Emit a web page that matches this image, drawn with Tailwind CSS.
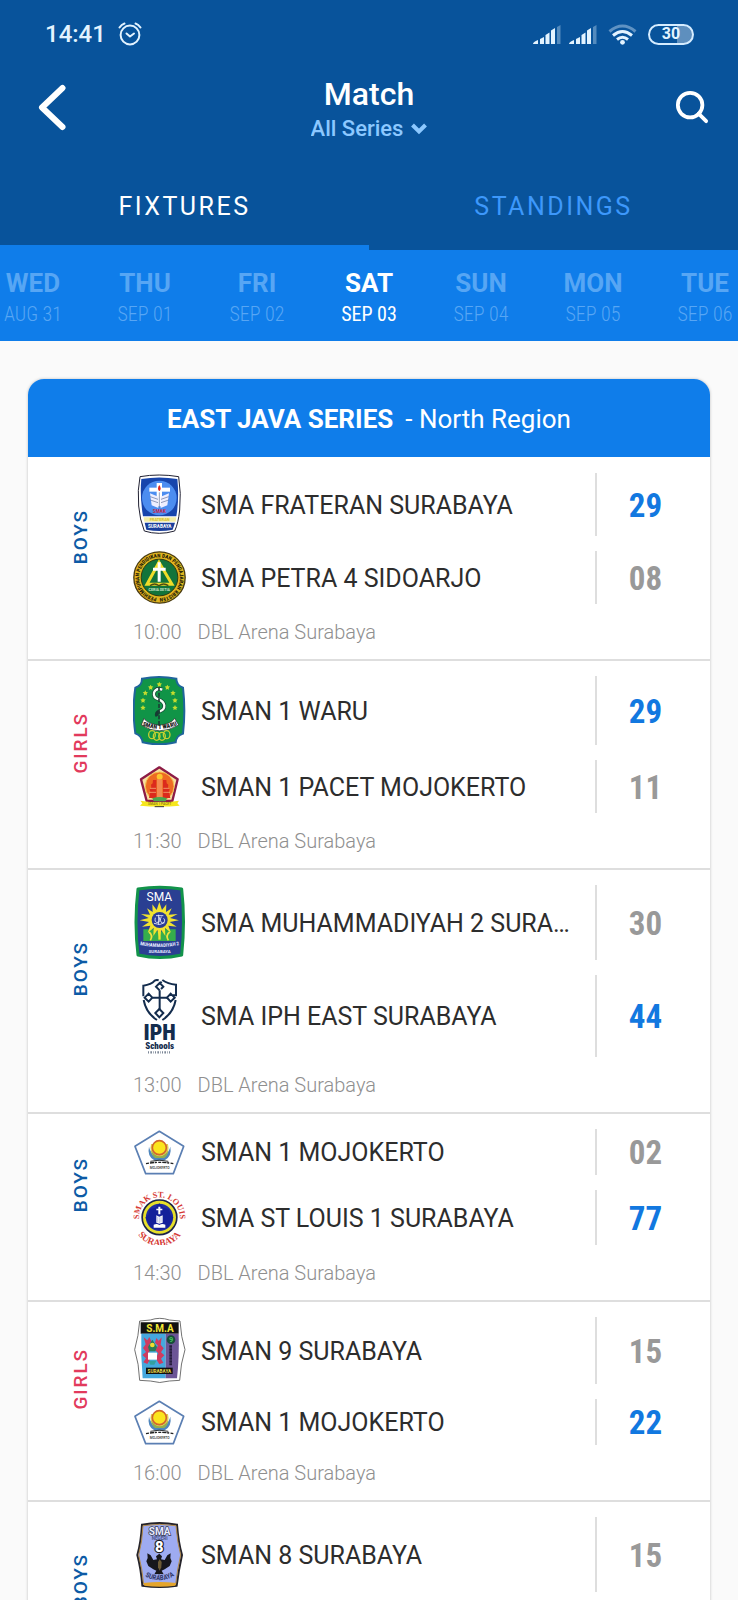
<!DOCTYPE html>
<html lang="en">
  <head>
    <meta charset="UTF-8" />
    <meta name="viewport" content="width=device-width, initial-scale=1.0" />
    <script src="https://cdn.jsdelivr.net/npm/@tailwindcss/browser@4"></script>
    <title>Match</title>
  </head>
  <body class="flex h-screen flex-col overflow-hidden bg-[#fafafa] font-[Roboto,sans-serif] text-[#2d2d2d]">
    <header class="shrink-0 bg-[#08539b] text-white">
      <!-- Status bar -->
      <div class="flex h-[68px] items-center justify-between pl-[45px] pr-11 text-[#e3f3ff]">
        <div class="flex items-center gap-3">
          <span class="text-[24px] leading-7 font-medium">14:41</span>
          <svg class="h-6 w-6" viewBox="0 0 24 24" fill="none" stroke="currentColor" stroke-width="2" stroke-linecap="round" stroke-linejoin="round">
            <circle cx="12" cy="13" r="9.400" />
            <path d="M8.500 11.500l3.500 3 4-3M1.500 5.500q2-3 5-4M22.500 5.500q-2-3-5-4" />
          </svg>
        </div>
        <div class="flex items-center">
          <svg class="mr-2 h-[21px] w-7" viewBox="0 0 28 21" fill="currentColor">
            <path d="M0 20q0-2 5-4v4zM7 15l4-2v7H7zM12.500 11l4-2.500V20h-4zM18 6.500L22 4v16h-4z" />
            <path opacity=".35" d="M24 3l3.500-2v19H24z" />
          </svg>
          <svg class="mr-[11px] h-[21px] w-7" viewBox="0 0 28 21" fill="currentColor">
            <path d="M0 20q0-2 5-4v4zM7 15l4-2v7H7zM12.500 11l4-2.500V20h-4zM18 6.500L22 4v16h-4z" />
            <path opacity=".35" d="M24 3l3.500-2v19H24z" />
          </svg>
          <svg class="mr-[11px] h-[21px] w-[29px]" viewBox="0 0 29 21" fill="none" stroke="currentColor" stroke-width="3">
            <path opacity=".4" d="M1.500 7.500q13-11 26 0" />
            <path d="M5 11.500q9.500-8 19 0M9 15.500q5.500-4.500 11 0" />
            <circle cx="14.500" cy="18.300" r="2.400" fill="currentColor" stroke="none" />
          </svg>
          <div class="flex h-[21px] w-[46px] items-center justify-center rounded-full border-2 border-[#d5ecff] bg-linear-to-r from-transparent from-65% to-white/35 to-65% text-[16px] leading-4 font-bold">30</div>
        </div>
      </div>

      <!-- Title -->
      <div class="flex h-[107px] items-start justify-between px-7">
        <button aria-label="Back" class="mt-[15px] flex h-12 w-12 items-center justify-center">
          <svg class="h-12 w-8" viewBox="0 0 32 48" fill="none" stroke="currentColor" stroke-width="6" stroke-linecap="round" stroke-linejoin="round">
            <path d="M26.500 5L6 24.500 26.500 44" />
          </svg>
        </button>
        <div class="flex flex-col items-center">
          <h1 class="mt-1.5 text-[32px] leading-10 font-medium">Match</h1>
          <div class="flex items-center gap-2 pt-px text-[#8cc8ff]">
            <select aria-label="Series" class="field-sizing-content appearance-none bg-transparent text-[22px] leading-7 font-medium">
              <option>All Series</option>
            </select>
            <svg class="h-3 w-4" viewBox="0 0 16 12" fill="none" stroke="currentColor" stroke-width="4">
              <path d="M1.500 2L8 8.500 14.500 2" />
            </svg>
          </div>
        </div>
        <button aria-label="Search" class="mt-[15px] flex h-12 w-12 items-center justify-center">
          <svg class="ml-3 h-[34px] w-[34px]" viewBox="0 0 36 36" fill="none" stroke="currentColor" stroke-width="4" stroke-linecap="round">
            <circle cx="16" cy="16" r="13" />
            <path d="M25 25l8 8" />
          </svg>
        </button>
      </div>

      <!-- Tabs -->
      <div class="flex h-[75px] text-[25px] tracking-widest">
        <button class="flex-1 border-b-[5px] border-[#0f7dea] pb-1.5">FIXTURES</button>
        <button class="flex-1 border-b-[5px] border-transparent pb-1.5 text-[#3d98fb]">STANDINGS</button>
      </div>
    </header>

    <!-- Days -->
    <nav class="flex h-[91px] shrink-0 justify-center overflow-hidden bg-[#0f7dea] pt-[18px] text-[#57a6f4]">
      <button class="flex w-28 shrink-0 flex-col items-center">
        <span class="text-[26px] leading-[30px] font-bold">WED</span>
        <span class="font-['Roboto_Condensed',Roboto,sans-serif] text-[20px] leading-8 font-light">AUG 31</span>
      </button>
      <button class="flex w-28 shrink-0 flex-col items-center">
        <span class="text-[26px] leading-[30px] font-bold">THU</span>
        <span class="font-['Roboto_Condensed',Roboto,sans-serif] text-[20px] leading-8 font-light">SEP 01</span>
      </button>
      <button class="flex w-28 shrink-0 flex-col items-center">
        <span class="text-[26px] leading-[30px] font-bold">FRI</span>
        <span class="font-['Roboto_Condensed',Roboto,sans-serif] text-[20px] leading-8 font-light">SEP 02</span>
      </button>
      <button class="flex w-28 shrink-0 flex-col items-center text-white">
        <span class="text-[26px] leading-[30px] font-bold">SAT</span>
        <span class="font-['Roboto_Condensed',Roboto,sans-serif] text-[20px] leading-8">SEP 03</span>
      </button>
      <button class="flex w-28 shrink-0 flex-col items-center">
        <span class="text-[26px] leading-[30px] font-bold">SUN</span>
        <span class="font-['Roboto_Condensed',Roboto,sans-serif] text-[20px] leading-8 font-light">SEP 04</span>
      </button>
      <button class="flex w-28 shrink-0 flex-col items-center">
        <span class="text-[26px] leading-[30px] font-bold">MON</span>
        <span class="font-['Roboto_Condensed',Roboto,sans-serif] text-[20px] leading-8 font-light">SEP 05</span>
      </button>
      <button class="flex w-28 shrink-0 flex-col items-center">
        <span class="text-[26px] leading-[30px] font-bold">TUE</span>
        <span class="font-['Roboto_Condensed',Roboto,sans-serif] text-[20px] leading-8 font-light">SEP 06</span>
      </button>
    </nav>

    <main class="min-h-0 flex-1 overflow-hidden px-7 pt-[38px]">
      <section class="rounded-t-2xl bg-white shadow-[0_0_3px_rgba(0,0,0,0.25)]">
        <h2 class="flex h-[78px] items-center justify-center gap-3 rounded-t-2xl bg-[#0f7dea] pt-0.5 text-[26px] text-white">
          <span class="font-bold">EAST JAVA SERIES</span>
          <span>- North Region</span>
        </h2>

        <!-- Frateran vs Petra 4 -->
        <article class="border-b-2 border-[#dedede] pt-4 pr-4 pb-[15px]">
          <div class="flex">
            <div class="flex w-[105px] shrink-0 items-center justify-center">
              <span class="mb-1 rotate-180 text-[19px] leading-6 font-medium tracking-widest text-[#0d5ba6] [writing-mode:vertical-rl]">BOYS</span>
            </div>
            <div class="flex min-w-0 flex-1 flex-col gap-[15px]">
              <div class="flex items-center gap-[15px]">
                <svg class="h-[63px] w-[53px] shrink-0" viewBox="339 54 159 189">
                  <path d="M360 65q57-10 116 0 8 50 3 100-4 40-15 63-47 14-91 0-14-35-17-75-4-50 4-88z" fill="#fff" stroke="#223" stroke-width="3" />
                  <path d="M364 72q54-9 108 0 6 60-3 112H369q-10-60-5-112z" fill="#1745ac" />
                  <circle cx="418" cy="129" r="52" fill="#4c8df0" />
                  <path d="M388 98h62v12h-62z" fill="#fff" />
                  <path d="M410 84h16v70h-16z" fill="#fff" />
                  <path d="M390 115l25 10v34l-20-8zM447 115l-25 10v34l20-8z" fill="#eef" />
                  <path d="M391 125l23 8M391 135l23 8M446 125l-23 8M446 135l-23 8M418 112v46" stroke="#5d6d96" stroke-width="2" />
                  <path d="M418 90q8 11 0 19-8-8 0-19z" fill="#e0261c" />
                  <text x="418" y="174" text-anchor="middle" font-size="14" font-weight="700" fill="#c8284a">SMAK</text>
                  <path d="M371 187h98l-2 13h-94z" fill="#f3eeaa" />
                  <text x="419" y="198" text-anchor="middle" font-size="12" font-weight="700" fill="#d6bf28">FRATERAN</text>
                  <path d="M374 203h91l-7 21q-38 8-79 0z" fill="#1b3f9c" />
                  <text x="419" y="219" text-anchor="middle" font-size="14" font-weight="700" fill="#fff">SURABAYA</text>
                </svg>
                <h3 class="min-w-0 flex-1 truncate pt-0.5 text-[25px]">SMA FRATERAN SURABAYA</h3>
                <div class="flex w-[99px] items-center justify-center self-stretch border-l-2 border-[#dedede] pt-0.5 font-['Roboto_Condensed',Roboto,sans-serif] text-[33px] leading-10 font-bold text-[#1278e0]">29</div>
              </div>
              <div class="flex items-center gap-[15px]">
                <svg class="h-[53px] w-[53px] shrink-0" viewBox="339 288 159 159">
                  <circle cx="418.500" cy="367.500" r="77" fill="#e0b41f" stroke="#4a3c12" stroke-width="4" />
                  <path id="petraRing" d="M418 429a61 61 0 1 1 1 0" fill="none" />
                  <text font-family="Roboto Condensed, Roboto" font-size="16" font-weight="800" fill="#241c08"><textPath href="#petraRing" startOffset="8">PERHIMPUNAN PENDIDIKAN DAN PENGAJARAN KRISTEN</textPath></text>
                  <circle cx="418.500" cy="367.500" r="55" fill="#12743b" stroke="#2d3a12" stroke-width="3" />
                  <path d="M417 322l-36 66h75z" fill="none" stroke="#f0dc28" stroke-width="9" />
                  <path d="M417 338l-19 42h38z" fill="#12743b" />
                  <path d="M413 322h9v58h-9zM399 338h38v9h-38z" fill="#fff" />
                  <path d="M390 392q14-10 27 0 14-10 28 0" fill="none" stroke="#4b4a13" stroke-width="4" />
                  <text x="418" y="409" text-anchor="middle" font-size="11" font-weight="700" fill="#cfe8d0">CERIA SETIA</text>
                </svg>
                <h3 class="min-w-0 flex-1 truncate pt-0.5 text-[25px]">SMA PETRA 4 SIDOARJO</h3>
                <div class="flex w-[99px] items-center justify-center self-stretch border-l-2 border-[#dedede] pt-0.5 font-['Roboto_Condensed',Roboto,sans-serif] text-[33px] leading-10 font-bold text-[#999]">08</div>
              </div>
            </div>
          </div>
          <p class="mt-4 flex gap-4 pl-[105px] text-[20px] leading-6 font-light text-[#8f8f8f]"><time>10:00</time><span>DBL Arena Surabaya</span></p>
        </article>

        <!-- Waru vs Pacet -->
        <article class="border-b-2 border-[#dedede] pt-[15px] pr-4 pb-[15px]">
          <div class="flex">
            <div class="flex w-[105px] shrink-0 items-center justify-center">
              <span class="mb-1 rotate-180 text-[19px] leading-6 font-medium tracking-widest text-[#e23a5c] [writing-mode:vertical-rl]">GIRLS</span>
            </div>
            <div class="flex min-w-0 flex-1 flex-col gap-[15px]">
              <div class="flex items-center gap-[15px]">
                <svg class="h-[69px] w-[53px] shrink-0" viewBox="339 47 159 207">
                  <path d="M366 55q52-10 103 0 0 20 20 27 8 70 0 138-20 6-22 26-50 12-99 0-3-20-22-27-10-70 0-137 20-6 20-27z" fill="#109447" stroke="#1f659b" stroke-width="6" />
                  <g fill="#c5dc2e">
                    <path id="star" d="M418 64l2.500 5 5.500.8-4 4 1 5.500-5-2.600-5 2.600 1-5.500-4-4 5.500-.8z" />
                    <use href="#star" x="-26" y="9" /><use href="#star" x="24" y="9" />
                    <use href="#star" x="-42" y="26" /><use href="#star" x="41" y="26" />
                    <use href="#star" x="-49" y="48" /><use href="#star" x="47" y="48" />
                    <use href="#star" x="-49" y="70" /><use href="#star" x="47" y="70" />
                  </g>
                  <path d="M427 88q-19-7-25 9-3 15 14 20 15 6 17 18 1 13-14 18-13 5-7 14" fill="none" stroke="#163a32" stroke-width="11" />
                  <path d="M427 88q-19-7-25 9-3 15 14 20 15 6 17 18 1 13-14 18" fill="none" stroke="#f5fff5" stroke-width="7" />
                  <path d="M417 80v122" stroke="#1c4136" stroke-width="5" stroke-dasharray="12 5" />
                  <path id="waru" d="M364 194q54 24 110-1" fill="none" />
                  <path d="M372 174q6 14 45 21 38-5 47-21l12 20q-59 35-112 0z" fill="#fff" stroke="#222" stroke-width="2" />
                  <text font-family="Roboto Condensed, Roboto" font-size="18" font-weight="900" fill="#222"><textPath href="#waru" startOffset="50%" text-anchor="middle">SMAN 1 WARU</textPath></text>
                  <g fill="none" stroke="#c6cf32" stroke-width="4">
                    <ellipse cx="396" cy="223" rx="10" ry="12" /><ellipse cx="410" cy="228" rx="10" ry="12" /><ellipse cx="426" cy="228" rx="10" ry="12" /><ellipse cx="440" cy="223" rx="10" ry="12" />
                  </g>
                </svg>
                <h3 class="min-w-0 flex-1 truncate pt-0.5 text-[25px]">SMAN 1 WARU</h3>
                <div class="flex w-[99px] items-center justify-center self-stretch border-l-2 border-[#dedede] pt-0.5 font-['Roboto_Condensed',Roboto,sans-serif] text-[33px] leading-10 font-bold text-[#1278e0]">29</div>
              </div>
              <div class="flex items-center gap-[15px]">
                <svg class="h-[53px] w-[53px] shrink-0" viewBox="339 300 159 159">
                  <path d="M418 322l55 36-16 65h-77l-17-65z" fill="#f7dfa0" stroke="#8d1c46" stroke-width="7" stroke-linejoin="round" />
                  <circle cx="419" cy="379" r="43" fill="#ee6a22" stroke="#f3c24d" stroke-width="3" />
                  <circle cx="419" cy="350" r="9" fill="#fbc72d" />
                  <path d="M399 360h10v54h-22l4-18-2-8 5-6-1-8 5-4zM439 360h-10v54h22l-4-18 2-8-5-6 1-8-5-4z" fill="#dc2a1c" />
                  <path d="M411 358h16v55h-16z" fill="#f48b50" />
                  <path d="M390 385h18M430 385h18M388 397h20M430 397h20" stroke="#f8c28a" stroke-width="2" />
                  <path d="M397 415q21-8 44 0l-4 9h-36z" fill="#4ba750" />
                  <path d="M361 422q58 9 116 0l-5 8 7 7q-60 5-119 0l7-7z" fill="#f6e61d" />
                  <text x="419" y="436" text-anchor="middle" font-size="10" font-weight="500" fill="#8a7a18">SMAN 1 PACET</text>
                  <path d="M404 440h28" stroke="#333" stroke-width="3" />
                </svg>
                <h3 class="min-w-0 flex-1 truncate pt-0.5 text-[25px]">SMAN 1 PACET MOJOKERTO</h3>
                <div class="flex w-[99px] items-center justify-center self-stretch border-l-2 border-[#dedede] pt-0.5 font-['Roboto_Condensed',Roboto,sans-serif] text-[33px] leading-10 font-bold text-[#999]">11</div>
              </div>
            </div>
          </div>
          <p class="mt-4 flex gap-4 pl-[105px] text-[20px] leading-6 font-light text-[#8f8f8f]"><time>11:30</time><span>DBL Arena Surabaya</span></p>
        </article>

        <!-- Muhammadiyah 2 vs IPH East -->
        <article class="border-b-2 border-[#dedede] pt-[15px] pr-4 pb-[15px]">
          <div class="flex">
            <div class="flex w-[105px] shrink-0 items-center justify-center">
              <span class="mb-1 rotate-180 text-[19px] leading-6 font-medium tracking-widest text-[#0d5ba6] [writing-mode:vertical-rl]">BOYS</span>
            </div>
            <div class="flex min-w-0 flex-1 flex-col gap-[15px]">
              <div class="flex items-center gap-[15px]">
                <svg class="h-[75px] w-[53px] shrink-0" viewBox="339 51 159 225">
                  <path d="M354 63q65-11 131 0 11 98 0 198-65 15-131 0-12-98 0-198z" fill="#2a3f92" stroke="#12934a" stroke-width="9" stroke-linejoin="round" />
                  <text x="418" y="98" text-anchor="middle" font-size="36" fill="#fff">SMA</text>
                  <path d="M370 184h33l15 12 16-12h33v35h-97z" fill="#35ad4c" />
                  <path d="M387 192q13 10 4 25M449 192q-13 10-4 25" fill="none" stroke="#f3e13c" stroke-width="5" />
                  <path d="M418 102l8 24 13-17-1 23 17-11-9 19 27-2-23 12 27 7-28 5 21 14-25-3 8 21-18-14 1 24-12-18-6 25-6-25-12 18 1-24-18 14 8-21-25 3 21-14-28-5 27-7-23-12 27 2-9-19 17 11-1-23 13 17z" fill="#f1e22f" />
                  <path d="M415 184h7v31h-7z" fill="#f1e22f" />
                  <circle cx="419" cy="156" r="24" fill="#2b3c96" />
                  <path d="M406 149q-4 16 8 14 9-3 3-16M424 146q-7 14 3 19 12-4 4-14M408 143h22M416 140v30M402 166q18 8 32-2" fill="none" stroke="#f4f5ff" stroke-width="2.500" />
                  <path id="muh" d="M360 231q58 12 118 0" fill="none" />
                  <text font-family="Roboto Condensed, Roboto" font-size="15" font-weight="700" fill="#e4e8ff"><textPath href="#muh" startOffset="50%" text-anchor="middle">MUHAMMADIYAH 2</textPath></text>
                  <text x="419" y="255" text-anchor="middle" font-size="13" font-weight="700" fill="#e4e8ff">SURABAYA</text>
                </svg>
                <h3 class="min-w-0 flex-1 truncate pt-0.5 text-[25px]">SMA MUHAMMADIYAH 2 SURABAYA</h3>
                <div class="flex w-[99px] items-center justify-center self-stretch border-l-2 border-[#dedede] pt-0.5 font-['Roboto_Condensed',Roboto,sans-serif] text-[33px] leading-10 font-bold text-[#999]">30</div>
              </div>
              <div class="flex items-center gap-[15px]">
                <svg class="h-[82px] w-[53px] shrink-0" viewBox="339 321 159 246">
                  <g fill="none" stroke="#132c4d" stroke-width="6">
                    <path d="M370 385v-32q24-3 34-15 5-3 12-1M427 336q16 12 41 14v32h-10M371 396q7 39 40 60M467 396q-7 39-40 60" />
                    <path d="M419 367v56M397 389h44" />
                    <path d="M419 367l-11-11 11-11 11 11-7 7M425 341l-9 8" />
                    <path d="M397 389l-11 12-12-12 12-12zM441 389l11-12 12 12-12 12z" />
                    <path d="M418 423l12 12-12 13-12-13z" />
                  </g>
                  <text x="419" y="516" text-anchor="middle" font-family="Roboto Condensed, Roboto" font-size="66" font-weight="900" fill="#132c4d">IPH</text>
                  <text x="419" y="544" text-anchor="middle" font-family="Roboto Condensed, Roboto" font-size="27" font-weight="900" fill="#132c4d">Schools</text>
                  <path d="M384 553h70" stroke="#7c8797" stroke-width="7" stroke-dasharray="3 4 5 3 2 4" />
                </svg>
                <h3 class="min-w-0 flex-1 truncate pt-0.5 text-[25px]">SMA IPH EAST SURABAYA</h3>
                <div class="flex w-[99px] items-center justify-center self-stretch border-l-2 border-[#dedede] pt-0.5 font-['Roboto_Condensed',Roboto,sans-serif] text-[33px] leading-10 font-bold text-[#1278e0]">44</div>
              </div>
            </div>
          </div>
          <p class="mt-4 flex gap-4 pl-[105px] text-[20px] leading-6 font-light text-[#8f8f8f]"><time>13:00</time><span>DBL Arena Surabaya</span></p>
        </article>

        <!-- Mojokerto vs St Louis 1 -->
        <article class="border-b-2 border-[#dedede] pt-[15px] pr-4 pb-[15px]">
          <div class="flex">
            <div class="flex w-[105px] shrink-0 items-center justify-center">
              <span class="mb-1 rotate-180 text-[19px] leading-6 font-medium tracking-widest text-[#0d5ba6] [writing-mode:vertical-rl]">BOYS</span>
            </div>
            <div class="flex min-w-0 flex-1 flex-col gap-[15px]">
              <div class="flex items-center gap-[15px]">
                <svg class="h-[46px] w-[53px] shrink-0" viewBox="339 51 159 138">
                  <g id="mojokerto">
                    <path d="M418 58l73 45-31 82h-83l-32-82z" fill="#fff" stroke="#5b7fb3" stroke-width="5" stroke-linejoin="round" />
                    <path d="M387 104q-7 30 18 42h27q25-12 19-42-4 17-17 23h-30q-14-6-17-23z" fill="#4f86bd" />
                    <path d="M393 96q-7 28 14 42h24q20-14 13-42z" fill="#e2cf55" />
                    <path d="M394 116q2 16 13 22h24q12-6 13-22-10 16-25 17-15-1-25-17z" fill="#8fae4d" />
                    <circle cx="418" cy="107" r="21" fill="#fbe51c" stroke="#d2672c" stroke-width="5" />
                    <path d="M391 148q27-7 54 0" fill="none" stroke="#333" stroke-width="3" />
                    <path d="M378 155q40-8 82 0" fill="none" stroke="#222" stroke-width="4" stroke-dasharray="9 3 13 2 6 4" />
                    <text x="419" y="170" text-anchor="middle" font-size="10" font-weight="500" fill="#333">MOJOKERTO</text>
                  </g>
                </svg>
                <h3 class="min-w-0 flex-1 truncate pt-0.5 text-[25px]">SMAN 1 MOJOKERTO</h3>
                <div class="flex w-[99px] items-center justify-center self-stretch border-l-2 border-[#dedede] pt-0.5 font-['Roboto_Condensed',Roboto,sans-serif] text-[33px] leading-10 font-bold text-[#999]">02</div>
              </div>
              <div class="flex items-center gap-[15px]">
                <svg class="h-[55px] w-[53px] shrink-0" viewBox="339 234 159 165">
                  <path id="louisTop" d="M362 340a61 61 0 1 1 113 0" fill="none" />
                  <text font-family="Liberation Serif" font-size="25" font-weight="700" fill="#d63a35"><textPath href="#louisTop" startOffset="50%" text-anchor="middle">SMAK ST. LOUIS</textPath></text>
                  <path id="louisBottom" d="M341 338a79 79 0 0 0 155 0" fill="none" />
                  <text font-family="Liberation Serif" font-size="28" font-weight="700" fill="#d63a35"><textPath href="#louisBottom" startOffset="50%" text-anchor="middle">SURABAYA</textPath></text>
                  <circle cx="418.500" cy="316" r="52" fill="#e6df2a" stroke="#1c2348" stroke-width="5" />
                  <circle cx="418.500" cy="316" r="41" fill="#1f2da0" />
                  <path d="M418 274l12 13 17 4 4 17 9 9-8 13-7 16-27 7-27-7-7-16-8-13 9-9 4-17 17-4z" fill="#14209a" />
                  <path d="M415 284h6v23h-6zM409 290h18v5h-18zM409 310l9 4 10-4v22l-10 3-9-3zM401 338q10-4 17 1 8-5 18-1v9h-35z" fill="#fff" />
                  <path d="M413 314v17M418 316v17M423 314v17" stroke="#8994cf" stroke-width="1.500" />
                </svg>
                <h3 class="min-w-0 flex-1 truncate pt-0.5 text-[25px]">SMA ST LOUIS 1 SURABAYA</h3>
                <div class="flex w-[99px] items-center justify-center self-stretch border-l-2 border-[#dedede] pt-0.5 font-['Roboto_Condensed',Roboto,sans-serif] text-[33px] leading-10 font-bold text-[#1278e0]">77</div>
              </div>
            </div>
          </div>
          <p class="mt-4 flex gap-4 pl-[105px] text-[20px] leading-6 font-light text-[#8f8f8f]"><time>14:30</time><span>DBL Arena Surabaya</span></p>
        </article>

        <!-- SMAN 9 vs Mojokerto -->
        <article class="border-b-2 border-[#dedede] pt-[15px] pr-4 pb-[15px]">
          <div class="flex">
            <div class="flex w-[105px] shrink-0 items-center justify-center">
              <span class="mb-1 rotate-180 text-[19px] leading-6 font-medium tracking-widest text-[#e23a5c] [writing-mode:vertical-rl]">GIRLS</span>
            </div>
            <div class="flex min-w-0 flex-1 flex-col gap-[15px]">
              <div class="flex items-center gap-[15px]">
                <svg class="h-[67px] w-[53px] shrink-0" viewBox="339 51 159 201">
                  <path d="M359 63l32-3q28-10 57 0l32 3q3 49 15 86-13 40-16 92l-31 2q-29 9-57 0l-32-2q-2-50-15-92 12-42 15-86z" fill="#fff" stroke="#555" stroke-width="2.500" />
                  <path d="M362 67h114v34H362z" fill="#111" />
                  <text x="420" y="95" text-anchor="middle" font-size="30" font-weight="700" fill="#f4e836">S.M.A</text>
                  <path d="M364 101h73v134h-69q-6-70-4-134z" fill="#45a8de" />
                  <path d="M437 101h39q2 70-5 134h-34z" fill="#6b5596" />
                  <circle cx="453" cy="119" r="13" fill="#174d3a" />
                  <text x="453" y="127" text-anchor="middle" font-size="22" font-weight="700" fill="#45c95c">9</text>
                  <path d="M452 136v60" stroke="#251c3d" stroke-width="8" stroke-dasharray="7 2" />
                  <path d="M371 112l11 9 6-10 7 14-8 9 8 14-10 10 8 15-11 19-12-5 8-12-11-10 11-9-9-12 8-11zM425 112l-9 10-7-8-4 14 9 9-9 13 10 10-8 15 11 18 12-5-7-12 10-10-10-9 8-12-9-11z" fill="#cf3b60" />
                  <path d="M397 119l14 22-5 13h-18l-4-13z" fill="#2c7b56" />
                  <circle cx="397" cy="135" r="7" fill="#f1dd31" />
                  <path d="M384 158h27v21h-27z" fill="#fff" />
                  <path d="M386 182h23l-6 12h-12z" fill="#33a0a0" />
                  <path d="M378 203h80v19h-80z" fill="#111" />
                  <text x="418" y="218" text-anchor="middle" font-size="14" font-weight="700" fill="#e8dc4c">SURABAYA</text>
                </svg>
                <h3 class="min-w-0 flex-1 truncate pt-0.5 text-[25px]">SMAN 9 SURABAYA</h3>
                <div class="flex w-[99px] items-center justify-center self-stretch border-l-2 border-[#dedede] pt-0.5 font-['Roboto_Condensed',Roboto,sans-serif] text-[33px] leading-10 font-bold text-[#999]">15</div>
              </div>
              <div class="flex items-center gap-[15px]">
                <svg class="h-[46px] w-[53px] shrink-0" viewBox="339 51 159 138"><use href="#mojokerto" /></svg>
                <h3 class="min-w-0 flex-1 truncate pt-0.5 text-[25px]">SMAN 1 MOJOKERTO</h3>
                <div class="flex w-[99px] items-center justify-center self-stretch border-l-2 border-[#dedede] pt-0.5 font-['Roboto_Condensed',Roboto,sans-serif] text-[33px] leading-10 font-bold text-[#1278e0]">22</div>
              </div>
            </div>
          </div>
          <p class="mt-4 flex gap-4 pl-[105px] text-[20px] leading-6 font-light text-[#8f8f8f]"><time>16:00</time><span>DBL Arena Surabaya</span></p>
        </article>

        <!-- SMAN 8 -->
        <article class="border-b-2 border-[#dedede] pt-[15px] pr-4 pb-[15px]">
          <div class="flex min-h-[132px]">
            <div class="flex w-[105px] shrink-0 items-center justify-center">
              <span class="mb-1 rotate-180 text-[19px] leading-6 font-medium tracking-widest text-[#0d5ba6] [writing-mode:vertical-rl]">BOYS</span>
            </div>
            <div class="flex min-w-0 flex-1 flex-col gap-[15px]">
              <div class="flex items-center gap-[15px]">
                <svg class="h-[75px] w-[53px] shrink-0" viewBox="339 648 159 225">
                  <path d="M366 671q52-10 105 0 4 54 15 91-11 50-16 92-51 8-103 0-4-50-15-92 11-37 14-91z" fill="#9eabf1" stroke="#25232a" stroke-width="6" />
                  <path d="M369 674q49-8 99 0 4 52 14 88-11 46-15 88-48 6-96 0-4-46-15-88 11-40 13-88z" fill="none" stroke="#b28b4b" stroke-width="3" />
                  <path d="M371 846q48-6 97 0l-2 8q-46 6-93 0z" fill="#e4a52c" />
                  <text x="419" y="701" text-anchor="middle" font-size="30" font-weight="700" fill="#e8ebff" stroke="#34394f" stroke-width="4" paint-order="stroke">SMA</text>
                  <text x="419" y="718" text-anchor="middle" font-size="14" font-weight="700" fill="#4c5588">NEGERI</text>
                  <text x="418" y="754" text-anchor="middle" font-size="44" font-weight="900" fill="#fff" stroke="#1d1d24" stroke-width="7" paint-order="stroke">8</text>
                  <path d="M418 758l8 8-3 9 11 2 8-14 10-6-1 14 4 10-6 14-15 10-9 4 6 11-13-1-1 9-1-9-13 1 6-11-9-4-15-10-6-14 4-10-1-14 10 6 8 14 11-2-3-9z" fill="#17171c" />
                  <path d="M414 783l5-8 6 8-1 16-5 10-5-10z" fill="#6d5b36" />
                  <path id="sby8" d="M362 817q57 42 114-1" fill="none" />
                  <text font-family="Roboto Condensed, Roboto" font-size="21" font-weight="700" fill="#333a6b"><textPath href="#sby8" startOffset="50%" text-anchor="middle">SURABAYA</textPath></text>
                </svg>
                <h3 class="min-w-0 flex-1 truncate pt-0.5 text-[25px]">SMAN 8 SURABAYA</h3>
                <div class="flex w-[99px] items-center justify-center self-stretch border-l-2 border-[#dedede] pt-0.5 font-['Roboto_Condensed',Roboto,sans-serif] text-[33px] leading-10 font-bold text-[#999]">15</div>
              </div>
            </div>
          </div>
        </article>
      </section>
    </main>
  </body>
</html>
